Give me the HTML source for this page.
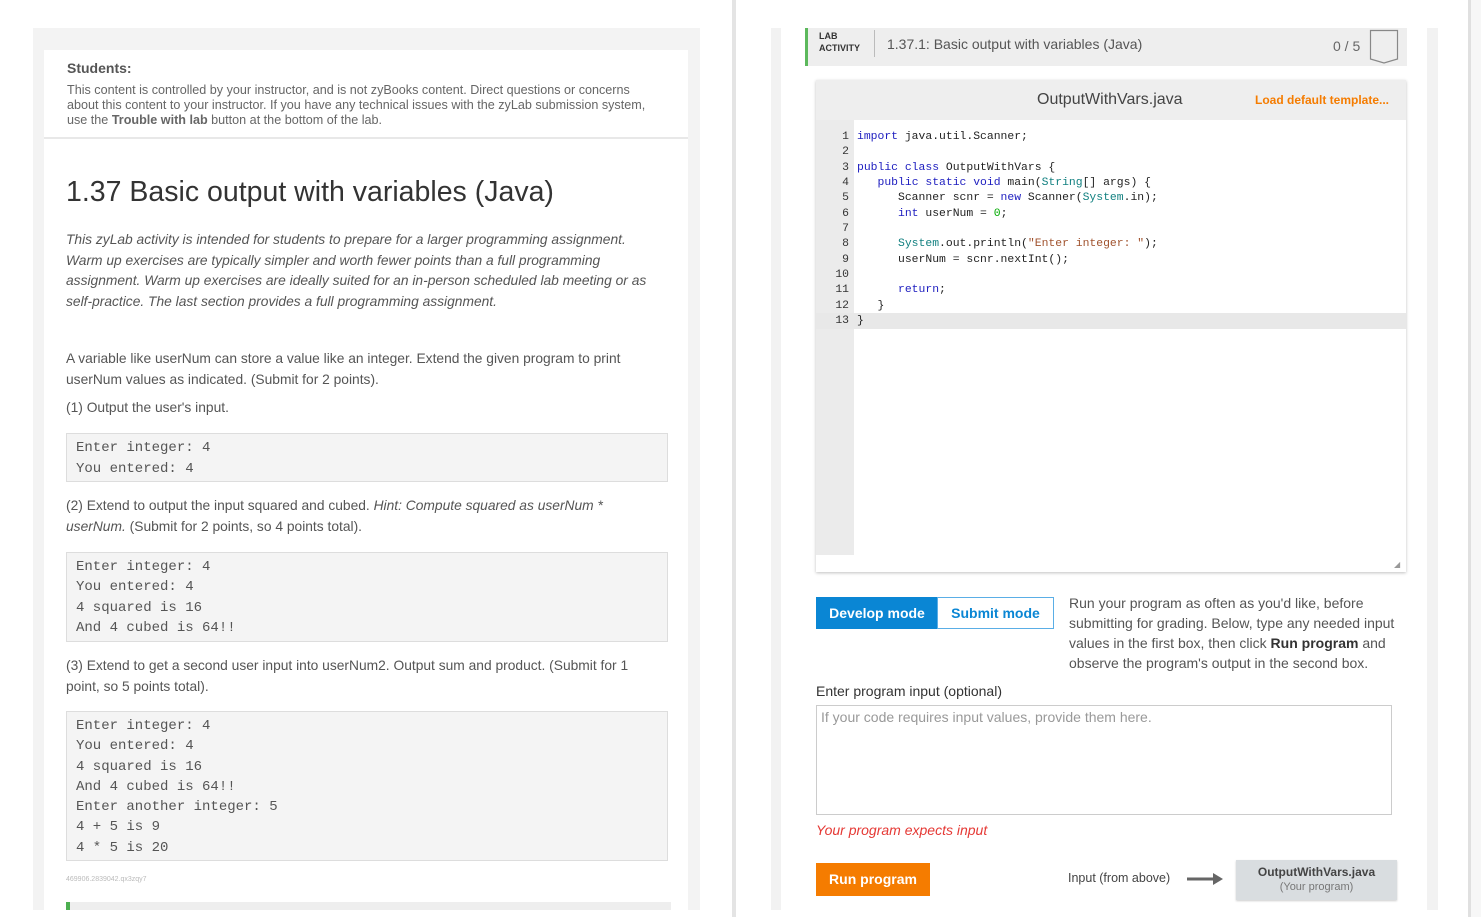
<!DOCTYPE html>
<html><head><meta charset="utf-8"><style>
*{margin:0;padding:0;box-sizing:border-box}
body{width:1481px;height:917px;background:#fff;position:relative;overflow:hidden;font-family:"Liberation Sans",sans-serif;color:#555}
.a{position:absolute;white-space:nowrap}
.box{position:absolute;left:66px;width:602px;background:#f4f4f4;border:1px solid #ddd;font-family:"Liberation Mono",monospace;font-size:14px;color:#555;padding:4px 9px;line-height:20.3px}
.p{position:absolute;left:66px;font-size:13.8px;line-height:20.5px;color:#555;white-space:nowrap}
.code{position:absolute;left:857px;font-family:"Liberation Mono",monospace;font-size:11.4px;color:#222;white-space:pre;line-height:15.33px}
.ln{position:absolute;left:816px;width:33px;text-align:right;font-family:"Liberation Mono",monospace;font-size:11.4px;color:#333;line-height:15.33px}
.k{color:#1d1dbf}.t{color:#128080}.s{color:#a0522d}.n{color:#0a0}
</style></head><body>
<div class="a" style="left:33px;top:28px;width:667px;height:882px;background:#f3f3f3"></div>
<div class="a" style="left:44px;top:50px;width:644px;height:860px;background:#fff"></div>
<div class="a" style="left:44px;top:137px;width:644px;height:2px;background:#e8e8e8"></div>
<div class="a" style="left:67px;top:60px;font-size:14px;font-weight:bold;color:#555">Students:</div>
<div class="a" style="left:67px;top:83px;font-size:12.6px;line-height:15px;color:#666">This content is controlled by your instructor, and is not zyBooks content. Direct questions or concerns<br>about this content to your instructor. If you have any technical issues with the zyLab submission system,<br>use the <b>Trouble with lab</b> button at the bottom of the lab.</div>
<div class="a" style="left:66px;top:176px;font-size:28.5px;color:#333">1.37 Basic output with variables (Java)</div>
<div class="p" style="top:230px;font-style:italic">This zyLab activity is intended for students to prepare for a larger programming assignment.<br>Warm up exercises are typically simpler and worth fewer points than a full programming<br>assignment. Warm up exercises are ideally suited for an in-person scheduled lab meeting or as<br>self-practice. The last section provides a full programming assignment.</div>
<div class="p" style="top:349px">A variable like userNum can store a value like an integer. Extend the given program to print<br>userNum values as indicated. (Submit for 2 points).</div>
<div class="p" style="top:398px">(1) Output the user's input.</div>
<div class="box" style="top:433px;height:49px;line-height:21px">Enter integer: 4<br>You entered: 4</div>
<div class="p" style="top:496px">(2) Extend to output the input squared and cubed. <i>Hint: Compute squared as userNum *<br>userNum.</i> (Submit for 2 points, so 4 points total).</div>
<div class="box" style="top:552px;height:90px">Enter integer: 4<br>You entered: 4<br>4 squared is 16<br>And 4 cubed is 64!!</div>
<div class="p" style="top:656px">(3) Extend to get a second user input into userNum2. Output sum and product. (Submit for 1<br>point, so 5 points total).</div>
<div class="box" style="top:711px;height:150px">Enter integer: 4<br>You entered: 4<br>4 squared is 16<br>And 4 cubed is 64!!<br>Enter another integer: 5<br>4 + 5 is 9<br>4 * 5 is 20</div>
<div class="a" style="left:66px;top:876px;font-size:7px;color:#bbb">469906.2839042.qx3zqy7</div>
<div class="a" style="left:66px;top:902px;width:605px;height:8px;background:#eee"></div>
<div class="a" style="left:66px;top:902px;width:4px;height:8px;background:#4caf50"></div>
<div class="a" style="left:732px;top:0;width:4px;height:917px;background:#e4e4e4"></div>
<div class="a" style="left:771px;top:28px;width:10px;height:882px;background:#f2f2f2"></div>
<div class="a" style="left:1427px;top:28px;width:11px;height:882px;background:#f2f2f2"></div>
<div class="a" style="left:1468px;top:0;width:3px;height:917px;background:#e0e0e0"></div>
<div class="a" style="left:1471px;top:0;width:10px;height:917px;background:#f7f7f7"></div>
<div class="a" style="left:805px;top:28px;width:602px;height:38px;background:#eee;border-left:3px solid #5cb85c"></div>
<div class="a" style="left:819px;top:30px;font-size:9px;font-weight:bold;line-height:12px;color:#333">LAB<br>ACTIVITY</div>
<div class="a" style="left:874px;top:30px;width:1px;height:27px;background:#bbb"></div>
<div class="a" style="left:887px;top:36px;font-size:14px;color:#555">1.37.1: Basic output with variables (Java)</div>
<div class="a" style="left:1333px;top:38px;font-size:14px;color:#666">0 / 5</div>
<svg class="a" style="left:1369px;top:29px" width="31" height="36"><path d="M1.5 1.5H28.5V30L15 34L1.5 30Z" fill="none" stroke="#888" stroke-width="1.2"/></svg>
<div class="a" style="left:816px;top:80px;width:590px;height:492px;background:#fff;box-shadow:0 1px 3px rgba(0,0,0,.25)"></div>
<div class="a" style="left:816px;top:80px;width:590px;height:40px;background:#eee"></div>
<div class="a" style="left:1037px;top:91px;font-size:16px;color:#444">OutputWithVars.java</div>
<div class="a" style="left:1255px;top:93px;font-size:12px;font-weight:bold;color:#f57c00">Load default template...</div>
<div class="a" style="left:816px;top:120px;width:38px;height:435px;background:#ebebeb"></div>
<div class="a" style="left:816px;top:313px;width:590px;height:16px;background:#e8e8e8"></div>
<div class="a" style="left:1394px;top:560px;font-size:8px;color:#999">◢</div>
<div class="ln" style="top:130px">1<br>2<br>3<br>4<br>5<br>6<br>7<br>8<br>9<br>10<br>11<br>12<br>13</div>
<div class="code" style="top:130px"><span class="k">import</span> java.util.Scanner;

<span class="k">public class</span> OutputWithVars {
   <span class="k">public static void</span> main(<span class="t">String</span>[] args) {
      Scanner scnr = <span class="k">new</span> Scanner(<span class="t">System</span>.in);
      <span class="k">int</span> userNum = <span class="n">0</span>;

      <span class="t">System</span>.out.println(<span class="s">"Enter integer: "</span>);
      userNum = scnr.nextInt();

      <span class="k">return</span>;
   }
}</div>
<div class="a" style="left:816px;top:597px;width:122px;height:32px;background:#0a86d4;color:#fff;font-size:14px;font-weight:bold;text-align:center;line-height:32px">Develop mode</div>
<div class="a" style="left:937px;top:597px;width:117px;height:32px;border:1px solid #5aaee6;color:#0a86d4;font-size:14px;font-weight:bold;text-align:center;line-height:30px">Submit mode</div>
<div class="a" style="left:1069px;top:593px;font-size:14px;line-height:20px;color:#555">Run your program as often as you'd like, before<br>submitting for grading. Below, type any needed input<br>values in the first box, then click <b style="color:#333">Run program</b> and<br>observe the program's output in the second box.</div>
<div class="a" style="left:816px;top:683px;font-size:14px;color:#333">Enter program input (optional)</div>
<div class="a" style="left:816px;top:705px;width:576px;height:110px;border:1px solid #ccc"></div>
<div class="a" style="left:821px;top:709px;font-size:14px;color:#999">If your code requires input values, provide them here.</div>
<div class="a" style="left:816px;top:822px;font-size:14px;font-style:italic;color:#e53935">Your program expects input</div>
<div class="a" style="left:816px;top:863px;width:114px;height:33px;background:#f57c00;color:#fff;font-size:14px;font-weight:bold;text-align:center;line-height:33px">Run program</div>
<div class="a" style="left:1068px;top:871px;font-size:12.5px;color:#444">Input (from above)</div>
<svg class="a" style="left:1186px;top:872px" width="38" height="14"><path d="M1 7H29" stroke="#666" stroke-width="3"/><path d="M27 1L37 7L27 13Z" fill="#666"/></svg>
<div class="a" style="left:1236px;top:860px;width:161px;height:40px;background:#d9dde0;box-shadow:0 1px 2px rgba(0,0,0,.2);text-align:center"><div style="font-size:12px;font-weight:bold;color:#444;margin-top:5px">OutputWithVars.java</div><div style="font-size:11px;color:#777;margin-top:2px">(Your program)</div></div>
</body></html>
